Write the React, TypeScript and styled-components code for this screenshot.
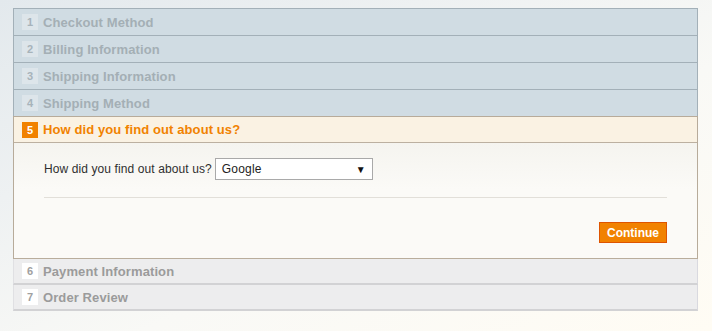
import React from "react";
import styled, { createGlobalStyle, css } from "styled-components";

const Global = createGlobalStyle`
  html, body { margin: 0; padding: 0; }
  body {
    width: 712px;
    height: 331px;
    overflow: hidden;
    font-family: "Liberation Sans", Arial, sans-serif;
    background: linear-gradient(155deg, #e3e9ed 0%, #eef1f2 30%, #f9f9f6 60%, #fffcf4 100%);
  }
`;

type Status = "done" | "active" | "pending";

const Page = styled.div`
  padding: 8px 14px 0 13px;
`;

const Steps = styled.ol`
  list-style: none;
  margin: 0;
  padding: 0;
  width: 685px;
`;

const Step = styled.li<{ $status: Status }>`
  display: block;
  box-sizing: border-box;
  ${(p) =>
    p.$status === "done" &&
    css`
      background: #d0dce3;
      border: 1px solid #a3b0b8;
      border-bottom: none;
    `}
  ${(p) =>
    p.$status === "active" &&
    css`
      border: 1px solid #b7ab9a;
      border-bottom-color: #b9ad9c;
    `}
  ${(p) =>
    p.$status === "pending" &&
    css`
      background: #ededee;
      border-left: 1px solid #e0e0e3;
      border-right: 1px solid #d9d9df;
      border-bottom: 2px solid #d2d2d4;
    `}
`;

const Header = styled.div<{ $status: Status }>`
  display: flex;
  align-items: center;
  gap: 5px;
  padding: 0 0 0 8px;
  box-sizing: border-box;
  height: ${(p) => (p.$status === "pending" ? 24 : 26)}px;
  ${(p) =>
    p.$status === "active" &&
    css`
      background: #faf2e3;
      border-bottom: 1px solid #bcb0a0;
      height: 26px;
    `}
`;

const Badge = styled.span<{ $status: Status }>`
  display: inline-flex;
  align-items: center;
  justify-content: center;
  width: 16px;
  height: 16px;
  font-size: 11px;
  font-weight: bold;
  ${(p) =>
    p.$status === "done"
      ? css`
          background: #dde5ea;
          color: #a7b3ba;
        `
      : p.$status === "active"
      ? css`
          background: #f18200;
          color: #ffffff;
        `
      : css`
          background: #ffffff;
          color: #a0a0a0;
        `}
`;

const Title = styled.span<{ $status: Status }>`
  font-size: 13px;
  font-weight: bold;
  letter-spacing: 0.1px;
  color: ${(p) =>
    p.$status === "done" ? "#a4afb5" : p.$status === "active" ? "#f18200" : "#9b9b9b"};
`;

const Body = styled.div`
  background: linear-gradient(180deg, #f5f4ef 0%, #fbfaf7 40%, #fbfaf7 100%);
  padding: 15px 30px 15px 30px;
  height: 115px;
  box-sizing: border-box;
`;

const FieldRow = styled.div`
  display: flex;
  align-items: center;
  gap: 3px;
  height: 22px;
`;

const Label = styled.label`
  font-size: 12px;
  letter-spacing: 0.1px;
  color: #2f2f2f;
`;

const Select = styled.div`
  box-sizing: border-box;
  width: 158px;
  height: 22px;
  border: 1px solid #a9a9a9;
  background: #ffffff;
  display: flex;
  align-items: center;
  justify-content: space-between;
  padding: 0 6px 0 6px;
  font-size: 12px;
  letter-spacing: 0.2px;
  color: #222;
`;

const Arrow = styled.span`
  font-size: 10px;
  color: #111;
`;

const Divider = styled.hr`
  border: none;
  border-top: 1px solid #e2dfd9;
  margin: 17px 0 0 0;
`;

const Actions = styled.div`
  display: flex;
  justify-content: flex-end;
  margin-top: 24px;
`;

const Button = styled.button`
  box-sizing: border-box;
  width: 68px;
  height: 21px;
  background: #f18200;
  border: 1px solid #de5400;
  color: #ffffff;
  font-family: "Liberation Sans", Arial, sans-serif;
  font-size: 12px;
  font-weight: bold;
  padding: 0;
  cursor: pointer;
`;

const steps: { n: number; title: string; status: Status }[] = [
  { n: 1, title: "Checkout Method", status: "done" },
  { n: 2, title: "Billing Information", status: "done" },
  { n: 3, title: "Shipping Information", status: "done" },
  { n: 4, title: "Shipping Method", status: "done" },
  { n: 5, title: "How did you find out about us?", status: "active" },
  { n: 6, title: "Payment Information", status: "pending" },
  { n: 7, title: "Order Review", status: "pending" },
];

export default function App() {
  return (
    <>
      <Global />
      <Page>
        <Steps>
          {steps.map((s) => (
            <Step key={s.n} $status={s.status}>
              <Header $status={s.status}>
                <Badge $status={s.status}>{s.n}</Badge>
                <Title $status={s.status}>{s.title}</Title>
              </Header>
              {s.status === "active" && (
                <Body>
                  <FieldRow>
                    <Label>How did you find out about us?</Label>
                    <Select>
                      <span>Google</span>
                      <Arrow>▼</Arrow>
                    </Select>
                  </FieldRow>
                  <Divider />
                  <Actions>
                    <Button>Continue</Button>
                  </Actions>
                </Body>
              )}
            </Step>
          ))}
        </Steps>
      </Page>
    </>
  );
}
